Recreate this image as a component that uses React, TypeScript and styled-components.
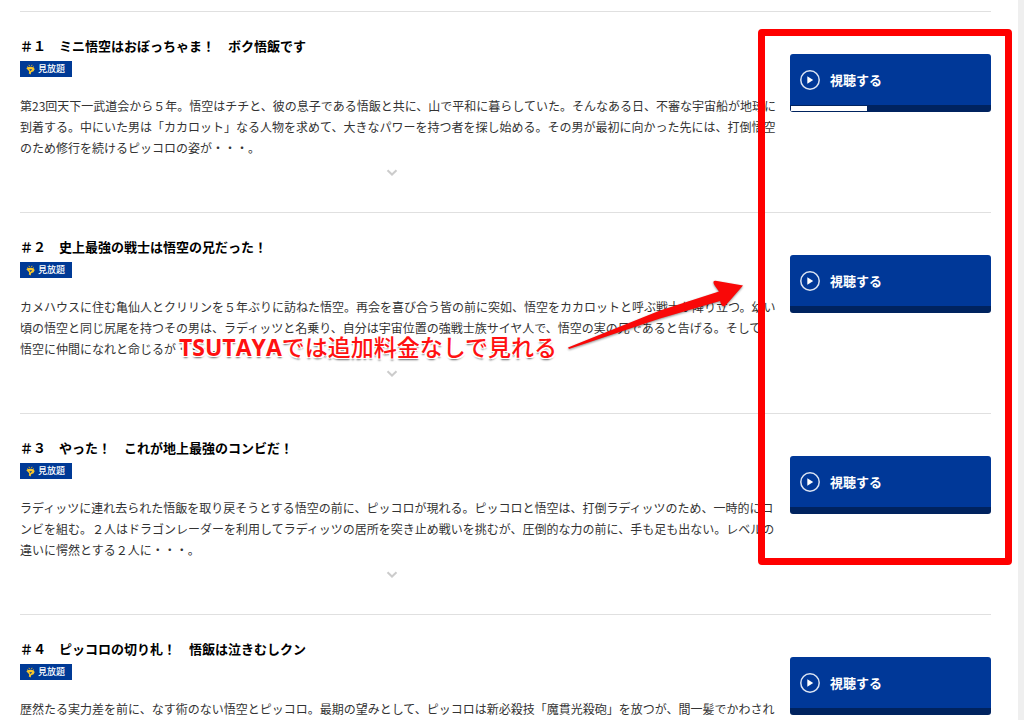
import React from "react";
import styled, { createGlobalStyle } from "styled-components";

const GlobalStyle = createGlobalStyle`
  * { box-sizing: border-box; }
  body {
    margin: 0;
    background: #fff;
    color: #333;
    font-family: "Noto Sans CJK JP", sans-serif;
  }
`;

const Page = styled.div`
  position: relative;
  height: 100vh;
  overflow: hidden;
  padding: 11px 27px 0 20px;
  border-right: 6px solid #efefef;
`;

const EpisodeList = styled.ul`
  list-style: none;
  margin: 0;
  padding: 0;
`;

const Episode = styled.li`
  display: flex;
  align-items: flex-start;
  gap: 26px;
  padding: 23px 0 35px;
  border-top: 1px solid #e0e0e0;
`;

const Details = styled.div`
  flex: 1;
  min-width: 0;
  display: flex;
  flex-direction: column;
  align-items: flex-start;
`;

const Title = styled.h2`
  margin: 0;
  font-size: 13px;
  line-height: 21px;
  font-weight: 700;
  color: #000;
  white-space: nowrap;
`;

const Badge = styled.span`
  display: flex;
  align-items: center;
  gap: 3px;
  width: 52px;
  height: 16px;
  margin-top: 5px;
  padding-left: 6px;
  background: #003a96;
  color: #fff;
  font-size: 9px;
  font-weight: 500;
  line-height: 16px;
  white-space: nowrap;
`;

const Description = styled.p`
  margin: 18px 0 0;
  font-size: 12px;
  line-height: 21px;
  white-space: pre;
`;

const ExpandButton = styled.button`
  display: flex;
  align-self: center;
  margin: 10px 0 0;
  padding: 0;
  border: 0;
  background: none;
  cursor: pointer;
`;

const WatchButton = styled.button`
  position: relative;
  display: flex;
  align-items: center;
  gap: 10px;
  flex: none;
  width: 201px;
  height: 58px;
  margin-top: 19px;
  padding: 0 10px;
  border: 0;
  border-bottom: 7px solid #00235f;
  border-radius: 3px;
  background: #003898;
  color: #fff;
  font: 700 13px/20px "Noto Sans CJK JP", sans-serif;
  cursor: pointer;
`;

const Progress = styled.span`
  position: absolute;
  left: 1px;
  bottom: -6px;
  width: 76px;
  height: 5px;
  background: #fff;
`;

const Highlight = styled.div`
  position: absolute;
  top: 29px;
  right: 6px;
  width: 254px;
  height: 536px;
  border: 7px solid #f00;
  border-radius: 4px;
  pointer-events: none;
`;

const Note = styled.p`
  position: absolute;
  top: 330px;
  left: 179px;
  margin: 0;
  color: #f11;
  font: 500 23px/34px "Open Sans", "Noto Sans CJK JP", sans-serif;
  white-space: nowrap;
  pointer-events: none;
  text-shadow: 1px 0 #fff, -1px 0 #fff, 0 1px #fff, 0 -1px #fff, 2px 1px #fff,
    -2px 1px #fff, 0 2px 2px rgba(0, 0, 0, 0.6);

  strong { font-weight: 700; }
`;

const Arrow = styled.svg`
  position: absolute;
  top: 275px;
  left: 562px;
  pointer-events: none;
  filter: drop-shadow(0 1px 1px rgba(0, 0, 0, 0.45));
`;

const episodes = [
  {
    title: "＃１　ミニ悟空はおぼっちゃま！　ボク悟飯です",
    watched: true,
    lines: [
      "第23回天下一武道会から５年。悟空はチチと、彼の息子である悟飯と共に、山で平和に暮らしていた。そんなある日、不審な宇宙船が地球に",
      "到着する。中にいた男は「カカロット」なる人物を求めて、大きなパワーを持つ者を探し始める。その男が最初に向かった先には、打倒悟空",
      "のため修行を続けるピッコロの姿が・・・。",
    ],
  },
  {
    title: "＃２　史上最強の戦士は悟空の兄だった！",
    watched: false,
    lines: [
      "カメハウスに住む亀仙人とクリリンを５年ぶりに訪ねた悟空。再会を喜び合う皆の前に突如、悟空をカカロットと呼ぶ戦士が降り立つ。幼い",
      "頃の悟空と同じ尻尾を持つその男は、ラディッツと名乗り、自分は宇宙位置の強戦士族サイヤ人で、悟空の実の兄であると告げる。そして、",
      "悟空に仲間になれと命じるが・・・。",
    ],
  },
  {
    title: "＃３　やった！　これが地上最強のコンビだ！",
    watched: false,
    lines: [
      "ラディッツに連れ去られた悟飯を取り戻そうとする悟空の前に、ピッコロが現れる。ピッコロと悟空は、打倒ラディッツのため、一時的にコ",
      "ンビを組む。２人はドラゴンレーダーを利用してラディッツの居所を突き止め戦いを挑むが、圧倒的な力の前に、手も足も出ない。レベルの",
      "違いに愕然とする２人に・・・。",
    ],
  },
  {
    title: "＃４　ピッコロの切り札！　悟飯は泣きむしクン",
    watched: false,
    lines: [
      "歴然たる実力差を前に、なす術のない悟空とピッコロ。最期の望みとして、ピッコロは新必殺技「魔貫光殺砲」を放つが、間一髪でかわされ",
    ],
  },
];

const BadgeIcon = () => (
  <svg width="9" height="11" viewBox="0 0 9 11" aria-hidden="true">
    <path d="M1 2.6 2 3.4M3 .8 3.4 2M6 .8 5.6 2M8 2.6 7 3.4" stroke="#d9ae2b" strokeWidth="1" />
    <path d="M.3 4.2Q2.4 2.4 4.5 2.8 7.4 2.5 8.7 5L7.6 7.2 5.2 8.2 4.6 10.4 2.8 9.6 3.2 7.2Z" fill="#f5c52c" />
    <path d="M3.2 5.4 6 5 4.7 7Z" fill="#003a96" />
  </svg>
);

const PlayIcon = () => (
  <svg width="20" height="20" viewBox="0 0 20 20" aria-hidden="true">
    <circle cx="10" cy="10" r="9.2" fill="none" stroke="#dbe4f3" strokeWidth="1.5" />
    <path d="M7.3 6.3 13.2 10 7.3 13.7Z" fill="#fff" />
  </svg>
);

const ChevronIcon = () => (
  <svg width="12" height="9" viewBox="0 0 12 9" aria-hidden="true">
    <path d="M1.5 2.2 6 6.5 10.5 2.2" fill="none" stroke="#ccc" strokeWidth="2" />
  </svg>
);

export default function App() {
  return (
    <>
      <GlobalStyle />
      <Page>
        <EpisodeList>
          {episodes.map((episode) => (
            <Episode key={episode.title}>
              <Details>
                <Title>{episode.title}</Title>
                <Badge>
                  <BadgeIcon />
                  見放題
                </Badge>
                <Description>{episode.lines.join("\n")}</Description>
                <ExpandButton type="button" aria-label="続きを表示">
                  <ChevronIcon />
                </ExpandButton>
              </Details>
              <WatchButton type="button">
                <PlayIcon />
                視聴する
                {episode.watched && <Progress />}
              </WatchButton>
            </Episode>
          ))}
        </EpisodeList>
        <Highlight />
        <Note>
          <strong>TSUTAYA</strong>では追加料金なしで見れる
        </Note>
        <Arrow width="190" height="82" viewBox="562 275 190 82" aria-hidden="true">
          <path
            d="M568 347.5 660 310.5 719 291.5 715 286Q711 280 717 281L743 285.5 726 305Q723 308 721 304L720 301 660 318.5 569 349Z"
            fill="#f90808"
          />
        </Arrow>
      </Page>
    </>
  );
}
